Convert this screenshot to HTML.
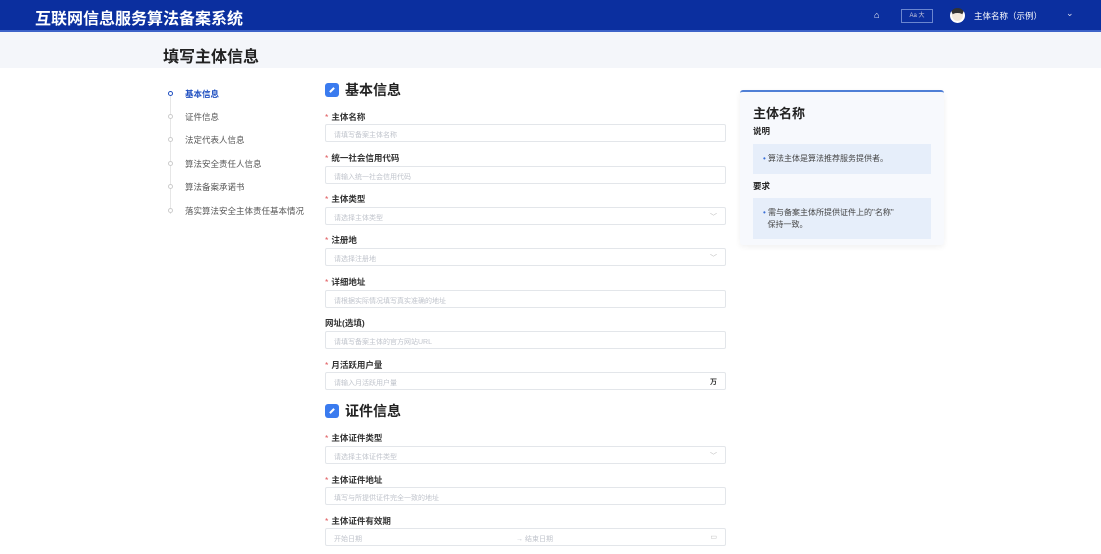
<!DOCTYPE html>
<html><head><meta charset="utf-8"><style>
*{margin:0;padding:0;box-sizing:border-box}
body{width:1101px;height:554px;overflow:hidden;background:#fff;font-family:"Liberation Sans","Noto Sans CJK SC",sans-serif;position:relative;color:#222}
.a{position:absolute;white-space:nowrap}
.hdr{left:0;top:0;width:1101px;height:32px;background:#0b2f9f;border-bottom:2px solid #3d63c8}
.sub{left:0;top:32px;width:1101px;height:36px;background:#f4f6fa}
.lbl{font-size:8.5px;font-weight:bold;color:#333}
.lbl b{color:#e0565b;font-weight:normal;margin-right:3px}
.inp{left:325px;width:401px;height:18px;border:1px solid #e3e6ea;border-radius:2px;font-size:7px;color:#c0c4cc;padding:5px 8px;background:#fff}
.chev{position:absolute;right:8px;top:4px;font-size:7px;color:#bbb}
.nav{font-size:8.5px;color:#555}
.dot{width:5px;height:5px;border:1px solid #ccc;border-radius:50%;background:#fff}
.sec{font-size:14px;font-weight:bold;color:#222}
.ico{width:14px;height:14px;background:#3a7bef;border-radius:3px;display:inline-block;vertical-align:-2px;margin-right:6px;position:relative}
.ico:after{content:"";position:absolute;left:4px;top:6px;width:6px;height:2px;background:#fff;transform:rotate(-45deg)}
</style></head><body>
<div class="a hdr"></div>
<div class="a" style="left:35px;top:5px;font-size:16px;font-weight:bold;color:#fff">互联网信息服务算法备案系统</div>
<div class="a" style="left:874px;top:10px;font-size:9px;color:#fff">⌂</div>
<div class="a" style="left:901px;top:9px;width:32px;height:14px;border:1px solid #6b86cf;font-size:6px;color:#ccd;text-align:center;line-height:12px">Aa 大</div>
<div class="a" style="left:950px;top:8px;width:15px;height:15px;border-radius:50%;background:#f3e9dc;border:2px solid #fff;border-top:5px solid #333"></div>
<div class="a" style="left:974px;top:10px;font-size:8.5px;color:#fff">主体名称（示例）</div>
<div class="a" style="left:1066px;top:8px;font-size:9px;color:#dde">⌄</div>
<div class="a sub"></div>
<div class="a" style="left:163px;top:43px;font-size:16px;font-weight:bold">填写主体信息</div>

<div class="a" style="left:170px;top:96px;width:1px;height:118px;background:#e6e6e6"></div>
<div class="a dot" style="left:168px;top:91px;border-color:#1f4fc0"></div>
<div class="a nav" style="left:185px;top:88px;color:#1f4fc0;font-weight:bold">基本信息</div>
<div class="a dot" style="left:168px;top:114px"></div><div class="a nav" style="left:185px;top:111px">证件信息</div>
<div class="a dot" style="left:168px;top:137px"></div><div class="a nav" style="left:185px;top:134px">法定代表人信息</div>
<div class="a dot" style="left:168px;top:161px"></div><div class="a nav" style="left:185px;top:158px">算法安全责任人信息</div>
<div class="a dot" style="left:168px;top:184px"></div><div class="a nav" style="left:185px;top:181px">算法备案承诺书</div>
<div class="a dot" style="left:168px;top:208px"></div><div class="a nav" style="left:185px;top:205px">落实算法安全主体责任基本情况</div>

<div class="a sec" style="left:325px;top:80px"><span class="ico"></span>基本信息</div>
<div class="a lbl" style="left:325px;top:111px"><b>*</b>主体名称</div>
<div class="a inp" style="top:124px">请填写备案主体名称</div>
<div class="a lbl" style="left:325px;top:152px"><b>*</b>统一社会信用代码</div>
<div class="a inp" style="top:166px">请输入统一社会信用代码</div>
<div class="a lbl" style="left:325px;top:193px"><b>*</b>主体类型</div>
<div class="a inp" style="top:207px">请选择主体类型<span class="chev">﹀</span></div>
<div class="a lbl" style="left:325px;top:234px"><b>*</b>注册地</div>
<div class="a inp" style="top:248px">请选择注册地<span class="chev">﹀</span></div>
<div class="a lbl" style="left:325px;top:276px"><b>*</b>详细地址</div>
<div class="a inp" style="top:290px">请根据实际情况填写真实准确的地址</div>
<div class="a lbl" style="left:325px;top:317px">网址(选填)</div>
<div class="a inp" style="top:331px">请填写备案主体的官方网站URL</div>
<div class="a lbl" style="left:325px;top:359px"><b>*</b>月活跃用户量</div>
<div class="a inp" style="top:372px">请输入月活跃用户量<span class="chev" style="color:#333;font-weight:bold">万</span></div>

<div class="a sec" style="left:325px;top:401px"><span class="ico"></span>证件信息</div>
<div class="a lbl" style="left:325px;top:432px"><b>*</b>主体证件类型</div>
<div class="a inp" style="top:446px">请选择主体证件类型<span class="chev">﹀</span></div>
<div class="a lbl" style="left:325px;top:474px"><b>*</b>主体证件地址</div>
<div class="a inp" style="top:487px">填写与所提供证件完全一致的地址</div>
<div class="a lbl" style="left:325px;top:515px"><b>*</b>主体证件有效期</div>
<div class="a inp" style="top:528px">开始日期<span style="position:absolute;left:190px;top:5px">→ 结束日期</span><span class="chev">▭</span></div>

<div class="a" style="left:740px;top:90px;width:204px;height:155px;background:#f7f9fd;border-top:2px solid #4f7fd6;border-radius:3px;box-shadow:0 2px 6px rgba(0,0,0,.06)"></div>
<div class="a" style="left:753px;top:103px;font-size:13px;font-weight:bold">主体名称</div>
<div class="a" style="left:753px;top:125px;font-size:8.5px;font-weight:bold">说明</div>
<div class="a" style="left:753px;top:144px;width:178px;height:30px;background:#e6eefa"></div>
<div class="a" style="left:763px;top:153px;font-size:8px;color:#444"><span style="color:#3a6fd6">•</span> 算法主体是算法推荐服务提供者。</div>
<div class="a" style="left:753px;top:180px;font-size:8.5px;font-weight:bold">要求</div>
<div class="a" style="left:753px;top:198px;width:178px;height:41px;background:#e6eefa"></div>
<div class="a" style="left:763px;top:207px;font-size:8px;color:#444;line-height:12px"><span style="color:#3a6fd6">•</span> 需与备案主体所提供证件上的"名称"<br>&nbsp;&nbsp;保持一致。</div>
</body></html>
